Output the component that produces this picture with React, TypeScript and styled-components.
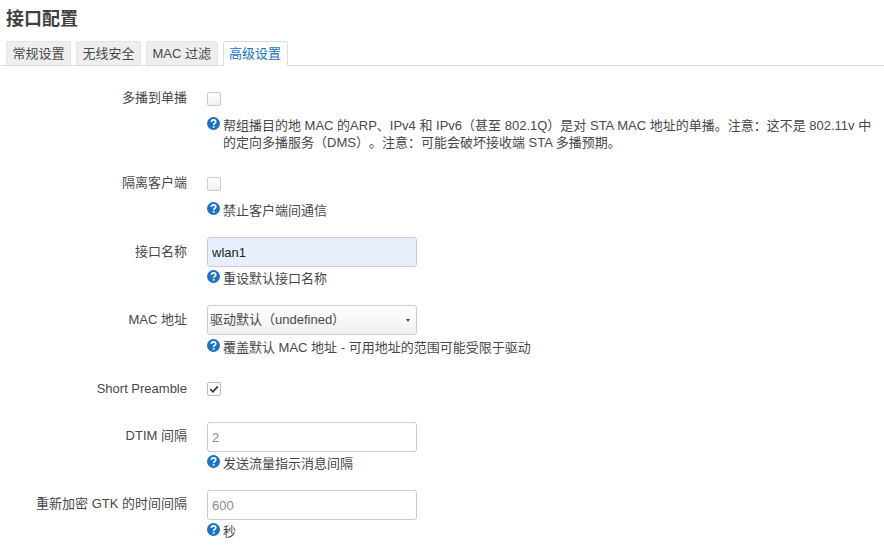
import type { ReactNode } from "react";
import styled, { createGlobalStyle } from "styled-components";

const FONT = `"Liberation Sans", "Noto Sans CJK SC", sans-serif`;

const GlobalStyle = createGlobalStyle`
  html, body {
    margin: 0;
    padding: 0;
    background: #ffffff;
    overflow: hidden;
  }
  body {
    font-family: ${FONT};
    font-size: 13px;
    color: #484848;
    text-spacing-trim: space-all;
  }
`;

const TABS = ["常规设置", "无线安全", "MAC 过滤", "高级设置"];

const HelpIcon = () => (
  <HelpSvg viewBox="0 0 14 14" aria-hidden="true">
    <circle cx="7" cy="7" r="7" fill="#1a72c4" />
    <path
      d="M4.7 5.5c0-1.5 1.1-2.4 2.4-2.4 1.3 0 2.3.9 2.3 2 0 1.8-2.2 1.7-2.2 3.4"
      fill="none"
      stroke="#ffffff"
      strokeWidth="1.8"
    />
    <rect x="6.2" y="9.6" width="1.9" height="1.9" fill="#ffffff" />
  </HelpSvg>
);

const Help = ({ gap, children }: { gap: number; children: ReactNode }) => (
  <HelpRow $gap={gap}>
    <HelpIcon />
    <HelpText>{children}</HelpText>
  </HelpRow>
);

export default function App() {
  return (
    <Page>
      <GlobalStyle />
      <Title>接口配置</Title>
      <TabBar>
        {TABS.map((tab, idx) => (
          <Tab key={tab} $active={idx === 3}>
            {tab}
          </Tab>
        ))}
      </TabBar>

      <Row $top={26}>
        <Label $offset={-2}>多播到单播</Label>
        <Field>
          <CheckBox />
          <Help gap={11}>
            帮组播目的地 MAC 的ARP、IPv4 和 IPv6（甚至 802.1Q）是对 STA MAC 地址的单播。注意：这不是 802.11v 中的定向多播服务（DMS）。注意：可能会破坏接收端 STA 多播预期。
          </Help>
        </Field>
      </Row>

      <Row $top={26}>
        <Label $offset={-2}>隔离客户端</Label>
        <Field>
          <CheckBox />
          <Help gap={11}>禁止客户端间通信</Help>
        </Field>
      </Row>

      <Row $top={18}>
        <Label $offset={7}>接口名称</Label>
        <Field>
          <TextInput defaultValue="wlan1" $filled />
          <Help gap={3}>重设默认接口名称</Help>
        </Field>
      </Row>

      <Row $top={18}>
        <Label $offset={7}>MAC 地址</Label>
        <Field>
          <SelectBox>
            驱动默认（undefined）
            <Caret />
          </SelectBox>
          <Help gap={4}>覆盖默认 MAC 地址 - 可用地址的范围可能受限于驱动</Help>
        </Field>
      </Row>

      <Row $top={26}>
        <Label $offset={-1}>Short Preamble</Label>
        <Field>
          <CheckBox $checked>
            <svg viewBox="0 0 12 12" width="12" height="12" aria-hidden="true">
              <path
                d="M2.2 6l2.7 2.8 4.9-5.4"
                fill="none"
                stroke="#333333"
                strokeWidth="1.7"
              />
            </svg>
          </CheckBox>
        </Field>
      </Row>

      <Row $top={25}>
        <Label $offset={6}>DTIM 间隔</Label>
        <Field>
          <TextInput placeholder="2" />
          <Help gap={3}>发送流量指示消息间隔</Help>
        </Field>
      </Row>

      <Row $top={18}>
        <Label $offset={6}>重新加密 GTK 的时间间隔</Label>
        <Field>
          <TextInput placeholder="600" />
          <Help gap={3}>秒</Help>
        </Field>
      </Row>
    </Page>
  );
}

const Page = styled.div`
  width: 884px;
  height: 557px;
  overflow: hidden;
`;

const Title = styled.h2`
  margin: 0;
  padding: 8px 0 0 6px;
  height: 33px;
  box-sizing: border-box;
  font-size: 18px;
  line-height: 22px;
  font-weight: bold;
  color: #404040;
`;

const TabBar = styled.div`
  display: flex;
  gap: 5px;
  height: 25px;
  padding-left: 6px;
  margin-top: 8px;
  box-sizing: border-box;
  border-bottom: 1px solid #dddddd;
`;

const Tab = styled.div<{ $active: boolean }>`
  height: 25px;
  box-sizing: border-box;
  padding: 0 5.5px;
  font-size: 13px;
  line-height: 23px;
  white-space: nowrap;
  border: 1px solid ${({ $active }) => ($active ? "#dddddd" : "#e4e4e4")};
  border-bottom-color: ${({ $active }) => ($active ? "#ffffff" : "#dddddd")};
  border-radius: 3px 3px 0 0;
  background: ${({ $active }) => ($active ? "#ffffff" : "#eeeeee")};
  color: ${({ $active }) => ($active ? "#1a72c4" : "#484848")};
`;

const Row = styled.div<{ $top: number }>`
  display: flex;
  margin-top: ${({ $top }) => $top}px;
`;

const Label = styled.div<{ $offset: number }>`
  width: 187px;
  flex: none;
  margin-top: ${({ $offset }) => $offset}px;
  text-align: right;
  font-size: 13px;
  line-height: 16px;
  color: #484848;
`;

const Field = styled.div`
  margin-left: 20px;
  width: 670px;
  flex: none;
`;

const CheckBox = styled.div<{ $checked?: boolean }>`
  width: 14px;
  height: 14px;
  box-sizing: border-box;
  border: 1px solid ${({ $checked }) => ($checked ? "#bbbbbb" : "#cccccc")};
  border-radius: 2px;
  background: ${({ $checked }) =>
    $checked ? "#ffffff" : "linear-gradient(#ffffff, #f0f0f0)"};
  line-height: 0;
`;

const HelpRow = styled.div<{ $gap: number }>`
  display: flex;
  align-items: flex-start;
  margin-top: ${({ $gap }) => $gap}px;
`;

const HelpText = styled.div`
  flex: 1;
  font-size: 13px;
  line-height: 17px;
  color: #484848;
`;

const HelpSvg = styled.svg`
  flex: none;
  width: 13px;
  height: 13px;
  margin-right: 3px;
`;

const TextInput = styled.input<{ $filled?: boolean }>`
  display: block;
  width: 210px;
  height: 30px;
  box-sizing: border-box;
  padding: 0 4px;
  font-family: ${FONT};
  font-size: 13px;
  color: #222222;
  border: 1px solid #cccccc;
  border-radius: 3px;
  outline: none;
  background: ${({ $filled }) => ($filled ? "#e8f0fe" : "#ffffff")};

  &::placeholder {
    color: #8a8a8a;
    opacity: 1;
  }
`;

const SelectBox = styled.div`
  position: relative;
  width: 210px;
  height: 30px;
  box-sizing: border-box;
  padding: 0 2px;
  line-height: 28px;
  font-size: 13px;
  color: #484848;
  border: 1px solid #cccccc;
  border-radius: 3px;
  background: linear-gradient(#ffffff, #f0f0f0);
`;

const Caret = styled.span`
  position: absolute;
  right: 6px;
  top: 13px;
  width: 0;
  height: 0;
  border-left: 2.5px solid transparent;
  border-right: 2.5px solid transparent;
  border-top: 3px solid #444444;
`;
